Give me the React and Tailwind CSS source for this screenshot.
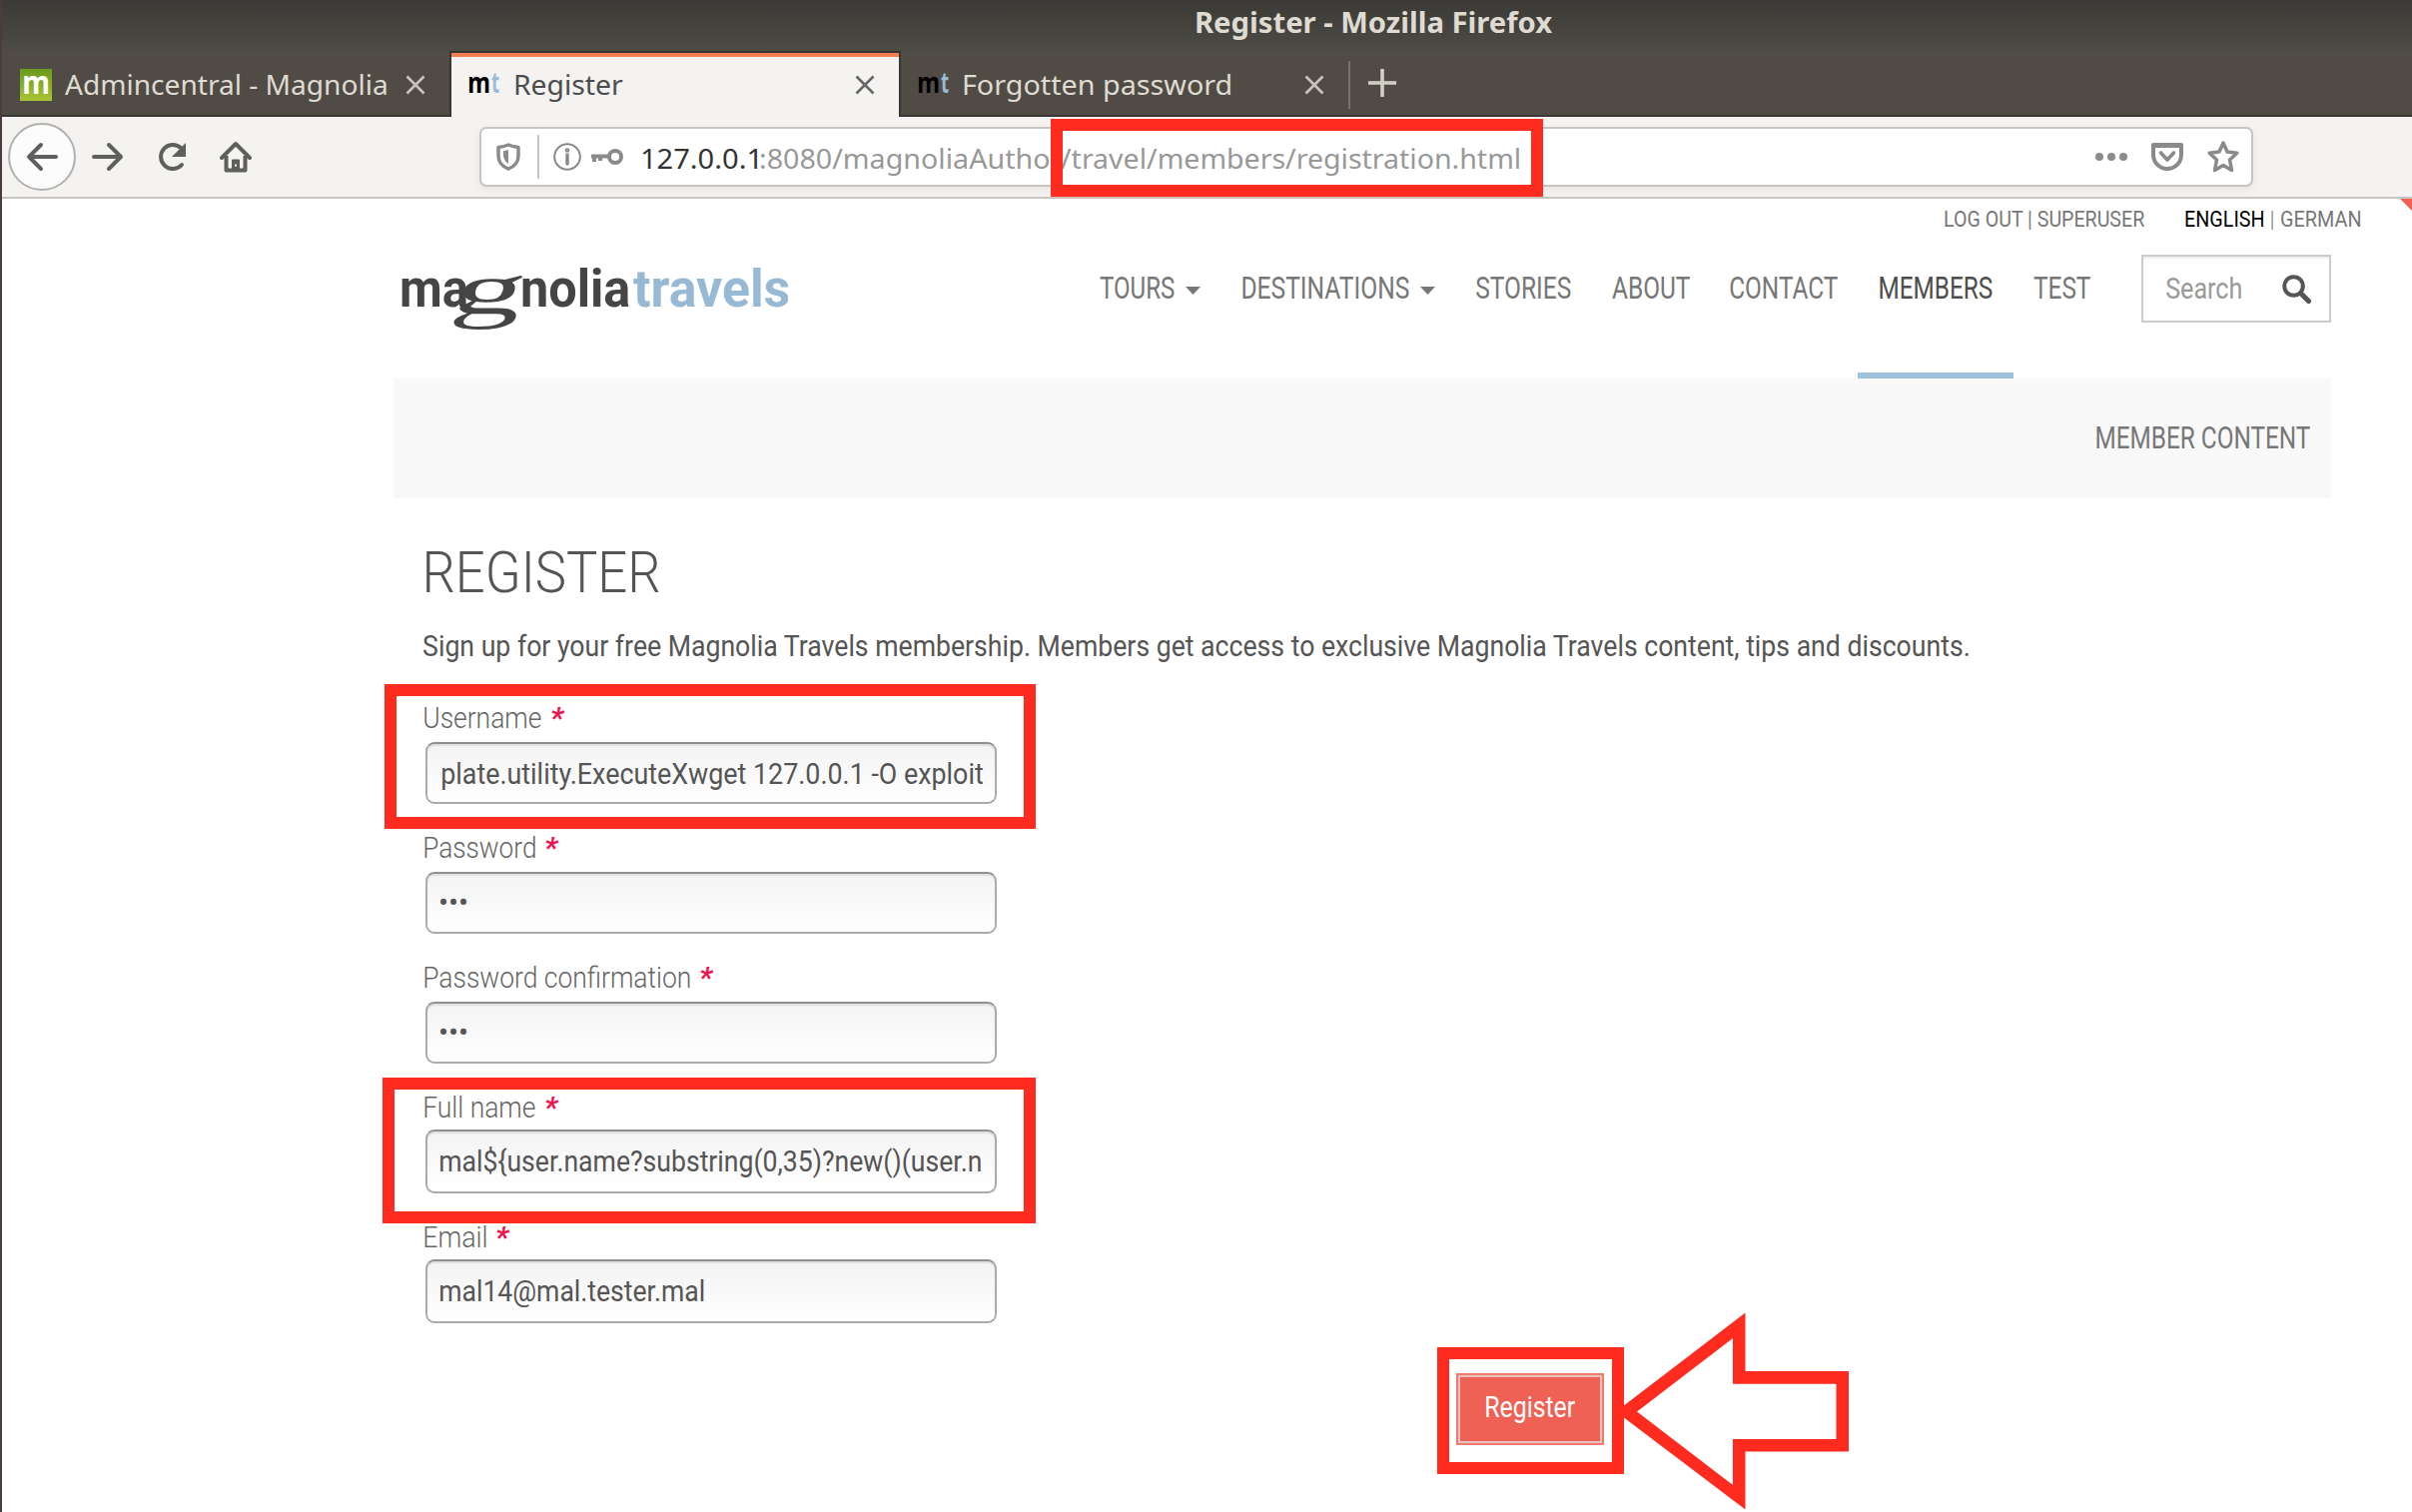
import React, { useLayoutEffect, useRef, useState } from "react";

/* Text whose visible ink spans exactly `w` pixels. */
function Fit({ w, className = "", children }) {
  const ref = useRef(null);
  const [t, setT] = useState({ s: 1, x: 0 });
  useLayoutEffect(() => {
    const cs = getComputedStyle(ref.current);
    const ctx = document.createElement("canvas").getContext("2d");
    ctx.font = `${cs.fontStyle} ${cs.fontWeight} ${cs.fontSize} ${cs.fontFamily}`;
    const m = ctx.measureText(children);
    const s = w / (m.actualBoundingBoxLeft + m.actualBoundingBoxRight);
    setT({ s, x: m.actualBoundingBoxLeft * s });
  }, [w, children]);
  return (
    <span className={`block shrink-0 whitespace-pre ${className}`} style={{ width: w }}>
      <span
        ref={ref}
        className="inline-block origin-left"
        style={{ transform: `translateX(${t.x}px) scaleX(${t.s})` }}
      >
        {children}
      </span>
    </span>
  );
}

const Close = ({ className }) => (
  <svg className={`h-5 w-5 shrink-0 ${className}`} viewBox="0 0 20 20" fill="none" stroke="currentColor" strokeWidth="2.6">
    <path d="M1.5 1.5 18.5 18.5M18.5 1.5 1.5 18.5" />
  </svg>
);

const Mt = ({ className = "" }) => (
  <span className={`flex w-[31px] shrink-0 text-[28px] font-bold leading-[64px] ${className}`}>
    <Fit w={20} className="text-black">m</Fit>
    <Fit w={8} className="ml-[2px] text-[#9abdd6]">t</Fit>
  </span>
);

const Caret = () => (
  <svg className="ml-[11px] mt-[48px] h-2 w-[15px] shrink-0" viewBox="0 0 15 8">
    <path d="M0 0h15L7.5 8z" fill="#777" />
  </svg>
);

function Chrome() {
  return (
    <header className="shrink-0 font-['Noto_Sans',sans-serif]">
      <div className="flex h-[51px] bg-linear-to-b from-[#3b3a36] to-[#4c4b44] pl-[1196px] text-[28px] font-bold leading-[44px] text-[#dfdbd2]">
        <Fit w={357}>Register - Mozilla Firefox</Fit>
      </div>
      <div className="flex h-[66px] bg-[#504c45] text-[28px] leading-[66px] text-[#dfdbd2]">
        <div className="flex w-[448px] items-center border-b-2 border-[#383630] pl-[18px]">
          <span className="mt-[4px] flex h-8 w-8 shrink-0 justify-center bg-linear-to-b from-[#689a1a] to-[#a9c333] text-[32px] font-bold leading-[26px] text-white">
            <Fit w={24}>m</Fit>
          </span>
          <Fit w={322} className="ml-[13px] mt-[2px]">Admincentral - Magnolia</Fit>
          <Close className="ml-[19px] mt-[4px] text-[#c8c5bd]" />
        </div>
        <div className="flex w-[452px] items-start border-x-2 border-t-2 border-[#383630] bg-[#f4f3f1] text-[#4c4c4c]">
          <div className="flex h-full w-full items-center border-t-4 border-[#f17d50] pl-[18px]">
            <Mt className="-mt-[10px]" />
            <Fit w={108} className="-mt-[6px] ml-[15px]">Register</Fit>
            <Close className="-mt-[4px] ml-[232px] text-[#666]" />
          </div>
        </div>
        <div className="flex flex-1 items-center border-b-2 border-[#383630] pl-[18px]">
          <Mt className="-mt-[2px]" />
          <Fit w={267} className="ml-[14px] mt-[2px]">Forgotten password</Fit>
          <Close className="ml-[74px] mt-[4px] text-[#c8c5bd]" />
          <span className="ml-6 mt-[4px] h-12 w-[2px] bg-[#77736b]" />
          <svg className="ml-[18px] h-7 w-7" viewBox="0 0 28 28" stroke="#d2cfc7" strokeWidth="3.6">
            <path d="M14 0v28M0 14h28" />
          </svg>
        </div>
      </div>
      <div className="relative flex h-[82px] items-start border-b-2 border-[#c8c4c0] bg-[#f4f3f1] pl-[6px] text-[#5f5f5d]">
        <span className="mt-[6px] flex h-[68px] w-[68px] items-center justify-center rounded-full border-2 border-[#b3b1ae] bg-[#fcfcfc]">
          <svg className="h-8 w-8" viewBox="0 0 32 32" fill="none" stroke="currentColor" strokeWidth="4" strokeLinecap="round" strokeLinejoin="round">
            <path d="M30 16H3M15 4 3 16l12 12" />
          </svg>
        </span>
        <svg className="ml-4 mt-[24px] h-8 w-8" viewBox="0 0 32 32" fill="none" stroke="currentColor" strokeWidth="4" strokeLinecap="round" strokeLinejoin="round">
          <path d="M2 16h27M17 4l12 12-12 12" />
        </svg>
        <svg className="ml-[32px] mt-[24px] h-8 w-8" viewBox="0 0 32 32" fill="none">
          <path d="M26 24A12 12 0 1 1 25 7" stroke="currentColor" strokeWidth="4" strokeLinecap="round" />
          <path d="M30 2v14H16z" fill="currentColor" />
        </svg>
        <svg className="ml-[32px] mt-[24px] h-8 w-8" viewBox="0 0 32 32" fill="none" stroke="currentColor">
          <path d="M2 17 16 3l14 14" strokeWidth="4" strokeLinecap="round" strokeLinejoin="round" />
          <path d="M6.500 15v14.500h19V15" strokeWidth="4" strokeLinejoin="round" />
          <path d="M12.500 29v-10h7v10z" fill="currentColor" strokeWidth="1" />
          <path d="M16 23.500v2" stroke="#f4f3f1" strokeWidth="2" />
        </svg>
        <div className="mt-[10px] ml-[228px] flex h-[60px] w-[1776px] items-center rounded-[7px] border-2 border-[#c8c4c0] bg-white text-[#8a8a8a] shadow-[0_3px_8px_rgba(0,0,0,0.06)]">
          <svg className="ml-[15px] h-[28px] w-6" viewBox="0 0 24 28" fill="none" stroke="currentColor">
            <path d="M2 4.500C6 4 9 3.300 12 2c3 1.300 6 2 10 2.500V13c0 6-4 11-10 13C6 24 2 19 2 13z" strokeWidth="3.500" strokeLinejoin="round" />
            <path d="M12 7v14c-3-2-5-5-5-9V8.200z" fill="currentColor" stroke="none" />
          </svg>
          <span className="ml-[17px] h-11 w-[2px] bg-[#c8c4c0]" />
          <svg className="ml-[14px] h-7 w-7" viewBox="0 0 28 28" fill="none" stroke="currentColor">
            <circle cx="14" cy="14" r="12.800" strokeWidth="2" />
            <path d="M14 12v9" strokeWidth="3.500" strokeLinecap="round" />
            <circle cx="14" cy="7.500" r="1.200" strokeWidth="2" />
          </svg>
          <svg className="ml-[10px] h-4 w-8" viewBox="0 0 32 16" fill="none" stroke="currentColor">
            <circle cx="24" cy="8" r="6" strokeWidth="4" />
            <path d="M0 7.500h18M3 7v6M9 7v5" strokeWidth="4" />
          </svg>
          <span className="ml-[19px] flex pt-[2px] text-[27.500px] leading-[57px] text-[#989898]">
            <Fit w={115} className="text-[#333]">127.0.0.1</Fit>
            <Fit w={302} className="ml-[3px]">:8080/magnoliaAuthor</Fit>
            <Fit w={459} className="-ml-[1px]">/travel/members/registration.html</Fit>
          </span>
          <svg className="ml-auto h-[10px] w-8" viewBox="0 0 32 10" fill="currentColor">
            <circle cx="4" cy="5" r="4" />
            <circle cx="16" cy="5" r="4" />
            <circle cx="28" cy="5" r="4" />
          </svg>
          <svg className="ml-6 h-[28px] w-8" viewBox="0 0 32 28" fill="none" stroke="currentColor" strokeLinejoin="round" strokeLinecap="round">
            <path d="M2 2h28v10a14 14 0 0 1-28 0z" strokeWidth="4" />
            <path d="M2 3h28" strokeWidth="4" />
            <path d="m9.500 10 6.500 7 6.500-7" strokeWidth="3.600" />
          </svg>
          <svg className="ml-6 mr-3 h-[34px] w-8" viewBox="0 0 32 34" fill="none" stroke="currentColor" strokeWidth="3.500" strokeLinejoin="round">
            <path d="m16 3 4 9 9.800 1.200-7.300 6.800 2 10.500L16 25.500 7.500 30.500l2-10.500-7.300-6.800L12 12z" />
          </svg>
        </div>
        <div className="absolute left-[1049.500px] top-[2px] h-[78px] w-[493px] border-[12.5px] border-[#fe2b1e]" />
      </div>
    </header>
  );
}

function Logo() {
  return (
    <div className="flex h-[110px] font-bold leading-[101px] text-[#454545] text-[51px]">
      <Fit w={66}>ma</Fit>
      <span className="-ml-[7px] mr-[6px] origin-center -skew-x-[14deg]">
        <Fit w={62} className="font-['Liberation_Serif',serif] text-[74px] font-normal leading-[100px]">g</Fit>
      </span>
      <Fit w={107} className="-ml-[6px]">nolia</Fit>
      <Fit w={156} className="ml-[4px] text-[#97b9d3]">travels</Fit>
    </div>
  );
}

function SiteHeader() {
  return (
    <>
      <div className="flex h-10 justify-end text-[22px] leading-[41px] text-[#777]">
        <Fit w={201}>LOG OUT | SUPERUSER</Fit>
        <Fit w={78} className="ml-10 text-black">ENGLISH</Fit>
        <Fit w={2} className="ml-[8px]">|</Fit>
        <Fit w={79} className="ml-[8px] mr-[52px]">GERMAN</Fit>
      </div>
      <div className="flex h-[140px] pl-[400px] text-[31px] leading-[99px] text-[#777]">
        <Logo />
        <nav className="ml-[311px] flex">
          <Fit w={75}>TOURS</Fit>
          <Caret />
          <Fit w={167} className="ml-[42px]">DESTINATIONS</Fit>
          <Caret />
          <Fit w={95} className="ml-[41px]">STORIES</Fit>
          <Fit w={78} className="ml-[41px]">ABOUT</Fit>
          <Fit w={108} className="ml-[40px]">CONTACT</Fit>
          <span className="ml-[20px] flex w-[156px] justify-center border-b-[6px] border-[#9fc2dc] text-[#4d4d4d]">
            <Fit w={113}>MEMBERS</Fit>
          </span>
          <Fit w={57} className="ml-[20px]">TEST</Fit>
        </nav>
        <div className="ml-[51px] mt-4 flex h-[68px] w-[190px] items-center border-2 border-[#ccc] text-[30px] leading-[64px] text-[#999] shadow-[inset_0_2px_2px_rgba(0,0,0,0.07)]">
          <Fit w={75} className="ml-[23px]">Search</Fit>
          <svg className="ml-[41px] h-[29px] w-[29px]" viewBox="0 0 29 29" fill="none" stroke="#555">
            <circle cx="11.500" cy="11.500" r="9.300" strokeWidth="4" />
            <path d="m19 19 7.500 7.500" strokeWidth="5.200" strokeLinecap="round" />
          </svg>
        </div>
      </div>
      <div className="ml-[392px] flex h-[120px] w-[1940px] justify-end bg-[#f9f9f9] pr-[21px] text-[31px] leading-[119px] text-[#777]">
        <Fit w={214}>MEMBER CONTENT</Fit>
      </div>
    </>
  );
}

function Field({ label, lw, value, vw, tall, inset = "pl-[13px]", leading = "leading-[59px]", mark }) {
  return (
    <div className="relative h-[130px]">
      <div className="ml-[1px] flex h-10 text-[30px] leading-[40px]">
        <Fit w={lw} className="font-light text-[#666]">{label}</Fit>
        <Fit w={14} className="ml-[10px] font-bold italic text-[#f0134d]">*</Fit>
      </div>
      <div
        className={`ml-[2px] flex w-[572px] rounded-[9px] border-2 border-[#acacac] border-t-[#909090] bg-linear-to-b from-[#f3f3f3] to-white text-[30px] text-[#555] shadow-[inset_0_2px_1px_rgba(0,0,0,0.08)] ${leading} ${inset} ${tall ? "mt-[2px] h-16" : "mt-1 h-[62px]"}`}
      >
        <Fit w={vw}>{value}</Fit>
      </div>
      {mark && <div className={`absolute border-[12.5px] border-[#fe2b1e] ${mark}`} />}
    </div>
  );
}

export default function App() {
  return (
    <div className="relative flex h-[1514px] w-[2415px] flex-col overflow-hidden border-l-2 border-[#4a3b3e] bg-white font-['Roboto',sans-serif]">
      <Chrome />
      <main className="relative">
        <svg className="absolute right-0 top-0 h-3 w-3" viewBox="0 0 12 12">
          <path d="M0 0h12v12z" fill="#ef6155" />
        </svg>
        <SiteHeader />
        <section className="pl-[422px] text-[#555]">
          <Fit w={233} className="ml-[3px] mt-[34px] text-[58px] font-light leading-[80px]">REGISTER</Fit>
          <Fit w={1548} className="mb-[30px] mt-[11px] text-[30px] leading-[45px]">
            Sign up for your free Magnolia Travels membership. Members get access to exclusive Magnolia Travels content, tips and discounts.
          </Fit>
          <Field label="Username" lw={117} value="plate.utility.ExecuteXwget 127.0.0.1 -O exploit" vw={541} inset="pl-[15px]" mark="-left-[39.500px] -top-[14px] h-[145px] w-[652px]" />
          <Field label="Password" lw={111} value="•••" vw={27} leading="leading-[57px]" />
          <Field label="Password confirmation" lw={266} value="•••" vw={27} leading="leading-[57px]" />
          <Field label="Full name" lw={111} value="mal${user.name?substring(0,35)?new()(user.n" vw={541} tall mark="-left-[41px] -top-[10px] h-[146px] w-[654px]" />
          <Field label="Email" lw={62} value="mal14@mal.tester.mal" vw={264} tall />
          <div className="relative ml-[1034px] mt-[26px] h-[72px] w-[148px] border-2 border-[#f07a70]">
            <div className="flex h-full justify-center border-2 border-[#e9c3be] bg-[#ef6155] text-[30px] leading-[60px] text-white">
              <Fit w={89}>Register</Fit>
            </div>
            <div className="absolute -left-[21px] -top-[28px] h-[127px] w-[187px] border-[12.5px] border-[#fe2b1e]" />
            <svg className="absolute -top-[64px] left-[158px] h-[202px] w-[236px]" viewBox="0 0 236 202">
              <path
                fill="#fe2b1e"
                fillRule="evenodd"
                d="M0 100.500 129.500 1.500V60H233v80.500H129.500V198.500zM21 100.500 117 27V72.700H220.500V128H117v46z"
              />
            </svg>
          </div>
        </section>
      </main>
    </div>
  );
}
